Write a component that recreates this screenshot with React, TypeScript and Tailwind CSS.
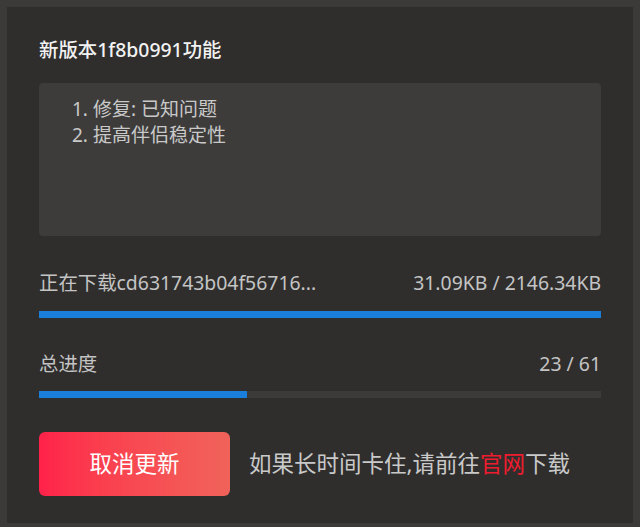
export default function App() {
  const font = "font-['Noto_Sans','Noto_Sans_CJK_SC',sans-serif]";
  return (
    <div className={`h-[527px] w-[640px] overflow-hidden bg-[#3b3a38] px-[7px] pt-[7px] ${font}`}>
      <div className="h-[516px] bg-[#2f2e2d] px-[32px] pt-[30px]">
        <h1 className="text-[19.4px] leading-[26px] font-medium text-[#f2f2f2]">新版本1f8b0991功能</h1>

        {/* Release notes */}
        <div className="mt-[20px] h-[153px] rounded-[4px] bg-[#3d3c3b] pl-[33px] pt-[13px] text-[19px] leading-[26px] text-[#c9c9c9]">
          <p>1. 修复: 已知问题</p>
          <p>2. 提高伴侣稳定性</p>
        </div>

        {/* Current file */}
        <div className="mt-[34px] flex items-center justify-between text-[19.4px] leading-[26px] text-[#c4c4c4]">
          <span>正在下载cd631743b04f56716...</span>
          <span>31.09KB / 2146.34KB</span>
        </div>
        <div className="mt-[15px] h-[7px] bg-[#3c3b3a]">
          <div className="h-full w-full bg-[#1a7fdb]" />
        </div>

        {/* Total */}
        <div className="mt-[33px] flex items-center justify-between text-[19.4px] leading-[26px] text-[#c4c4c4]">
          <span>总进度</span>
          <span>23 / 61</span>
        </div>
        <div className="mt-[14px] h-[7px] bg-[#3c3b3a]">
          <div className="h-full w-[208px] bg-[#1a7fdb]" />
        </div>

        <div className="mt-[34px] flex items-center gap-[19px]">
          <button className="h-[64px] w-[191px] rounded-[6px] bg-gradient-to-r from-[#ff2149] to-[#f0625a] text-[22.5px] text-white">
            取消更新
          </button>
          <p className="text-[22.5px] text-[#c9c9c9]">
            如果长时间卡住,请前往<span className="text-[#ee1c2e]">官网</span>下载
          </p>
        </div>
      </div>
    </div>
  );
}
